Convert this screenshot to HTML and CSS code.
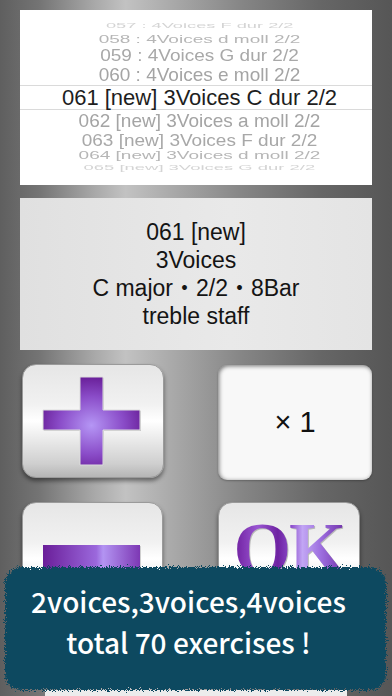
FILE: index.html
```html
<!DOCTYPE html>
<html lang="en">
<head>
<meta charset="utf-8">
<title>Voices</title>
<link rel="stylesheet" href="styles.css">
</head>
<body>
<svg class="defs" width="0" height="0" aria-hidden="true">
  <defs>
    <filter id="rough" x="-5%" y="-10%" width="110%" height="120%">
      <feTurbulence type="fractalNoise" baseFrequency="1.1" numOctaves="3" seed="7" result="n"/>
      <feDisplacementMap in="SourceGraphic" in2="n" scale="9" xChannelSelector="R" yChannelSelector="G"/>
    </filter>
    <radialGradient id="purple" cx="0.5" cy="0.55" r="0.6">
      <stop offset="0" stop-color="#b596f5"/>
      <stop offset="0.55" stop-color="#8a4cc8"/>
      <stop offset="1" stop-color="#62168f"/>
    </radialGradient>
  </defs>
</svg>
<main class="screen">
  <section class="picker">
    <div class="row r057"><span>057 : 4Voices F dur 2/2</span></div>
    <div class="row r058"><span>058 : 4Voices d moll 2/2</span></div>
    <div class="row r059"><span>059 : 4Voices G dur 2/2</span></div>
    <div class="row r060"><span>060 : 4Voices e moll 2/2</span></div>
    <div class="row sel"><span>061 [new] 3Voices C dur 2/2</span></div>
    <div class="row r062"><span>062 [new] 3Voices a moll 2/2</span></div>
    <div class="row r063"><span>063 [new] 3Voices F dur 2/2</span></div>
    <div class="row r064"><span>064 [new] 3Voices d moll 2/2</span></div>
    <div class="row r065"><span>065 [new] 3Voices G dur 2/2</span></div>
  </section>
  <section class="info">
    <p>061 [new]</p>
    <p>3Voices</p>
    <p>C major・2/2・8Bar</p>
    <p>treble staff</p>
  </section>
  <section class="pad">
    <button class="key plus" type="button" aria-label="plus">
      <svg width="142" height="114" viewBox="0 0 142 114">
        <path class="cross-shadow" d="M59 14 H82 V47 H119 V67 H82 V102 H59 V67 H22 V47 H59 Z"/>
        <path class="cross" d="M58 13 H81 V46 H118 V66 H81 V101 H58 V66 H21 V46 H58 Z"/>
      </svg>
    </button>
    <div class="count">× 1</div>
    <button class="key minus" type="button" aria-label="minus"><span class="bar"></span></button>
    <button class="key ok" type="button"><span class="ok-text">OK</span></button>
  </section>
  <div class="start"></div>
</main>
<div class="banner">
  <p>2voices,3voices,4voices</p>
  <p>total 70 exercises !</p>
</div>
</body>
</html>
```
FILE: styles.css
```css
html, body {
  margin: 0;
  width: 392px;
  height: 696px;
  overflow: hidden;
}
body {
  position: relative;
  font-family: "Liberation Sans", "Noto Sans CJK JP", sans-serif;
  background: linear-gradient(to right, #5f5f5f 0%, #747474 10%, #a8a8a8 24%, #c2c2c2 32%, #a5a5a5 46%, #858585 62%, #666666 82%, #565656 100%);
}
.defs {
  position: absolute;
  width: 0;
  height: 0;
}
.screen {
  padding: 10px 20px 0 20px;
  display: flex;
  flex-direction: column;
}

/* picker */
.picker {
  height: 175px;
  box-sizing: border-box;
  padding: 9px 0 0 7px;
  background: #fff;
  display: flex;
  flex-direction: column;
  overflow: hidden;
}
.row {
  display: flex;
  align-items: center;
  justify-content: center;
  white-space: nowrap;
  font-size: 19px;
  color: #a4a4a4;
  overflow: visible;
}
.row span {
  display: inline-block;
  line-height: 1;
}
.r057 { height: 13px; color: #d4d4d4; }
.r057 span { transform: scale(0.96, 0.37); }
.r058 { height: 14px; color: #b6b6b6; }
.r058 span { transform: scaleY(0.6); }
.r059 { height: 18px; color: #a8a8a8; }
.r059 span { transform: scaleY(0.88); }
.r060 { height: 21px; }
.r060 span { transform: scaleY(0.96); }
.row.sel {
  height: 25px;
  margin-left: -7px;
  padding-left: 7px;
  box-sizing: border-box;
  border-top: 1px solid #dadada;
  border-bottom: 1px solid #dadada;
  font-size: 22px;
  color: #1e1e1e;
}
.r062 { height: 21px; }
.r062 span { transform: scaleY(0.96); }
.r063 { height: 18px; color: #a8a8a8; }
.r063 span { transform: scaleY(0.88); }
.r064 { height: 13px; color: #b6b6b6; }
.r064 span { transform: scaleY(0.6); }
.r065 { height: 10px; color: #d4d4d4; }
.r065 span { transform: scale(0.97, 0.37); }

/* info */
.info {
  margin-top: 13px;
  height: 152px;
  background: linear-gradient(to right, #e0e0e0, #e9e9e9 60%, #e4e4e4);
  display: flex;
  flex-direction: column;
  align-items: center;
  justify-content: center;
  font-size: 23px;
  line-height: 28px;
  color: #141414;
}
.info p {
  margin: 0;
}

/* buttons */
.pad {
  margin-top: 14px;
  padding-left: 2px;
  display: grid;
  grid-template-columns: 142px 154px;
  grid-auto-rows: 114px;
  column-gap: 54px;
  row-gap: 24px;
}
.key {
  margin: 0;
  padding: 0;
  border: 1px solid #9a9a9a;
  border-radius: 14px;
  background: linear-gradient(to bottom, #e6e6e6 0%, #f1f1f1 35%, #ffffff 50%, #ececec 65%, #cfcfcf 88%, #b5b5b5 100%);
  box-shadow: 0 3px 4px rgba(0, 0, 0, 0.45);
  box-sizing: border-box;
  position: relative;
  overflow: hidden;
  display: block;
}
.plus svg {
  display: block;
  position: absolute;
  left: -1px;
  top: -1px;
}
.cross-shadow {
  fill: #c9c9c9;
}
.cross {
  fill: url(#purple);
  stroke: #dcdcdc;
  stroke-width: 1;
}
.count {
  margin-top: 1px;
  height: 115px;
  border-radius: 9px;
  background: #f8f8f8;
  box-shadow: inset 1px 1px 4px rgba(0, 0, 0, 0.55), 0 1px 2px rgba(0, 0, 0, 0.25);
  display: flex;
  align-items: center;
  justify-content: center;
  font-size: 29px;
  color: #111;
}
.minus {
  width: 141px;
}
.minus .bar {
  position: absolute;
  left: 20px;
  top: 42px;
  width: 97px;
  height: 24px;
  background: linear-gradient(to right, #6a1e99, #9b68dc 55%, #b394f2 62%, #7d38b4);
  box-shadow: 1px 1px 0 #cfcfcf;
}
.ok {
  width: 142px;
  display: flex;
  justify-content: center;
  align-items: flex-start;
  padding-top: 9px;
}
.ok-text {
  font-family: "Liberation Serif", serif;
  font-weight: bold;
  font-size: 74px;
  line-height: 1;
  letter-spacing: -2px;
  background: linear-gradient(to right, #6c1c9c 0%, #9a56d2 22%, #6e22a2 40%, #8c4ccc 52%, #c2a6f4 62%, #9e70e0 78%, #7030a8 100%);
  -webkit-background-clip: text;
  background-clip: text;
  color: transparent;
  filter: drop-shadow(1px 1px 0 #b8b8b8);
}
.start {
  margin: 74px 0 0 25px;
  width: 302px;
  height: 20px;
  background: #ececec;
}

/* banner */
.banner {
  position: absolute;
  z-index: 5;
  left: 5px;
  top: 567px;
  width: 381px;
  height: 123px;
  box-sizing: border-box;
  padding: 14px 14px 0 0;
  color: #ffffff;
  font-family: "Noto Sans CJK JP", "Noto Sans", sans-serif;
  font-weight: 500;
  font-size: 28px;
  line-height: 41px;
  text-align: center;
}
.banner::before {
  content: "";
  position: absolute;
  inset: 0;
  border-radius: 16px;
  background: #0a4a61;
  filter: url(#rough);
  z-index: -1;
}
.banner p {
  margin: 0;
  white-space: nowrap;
}
```
